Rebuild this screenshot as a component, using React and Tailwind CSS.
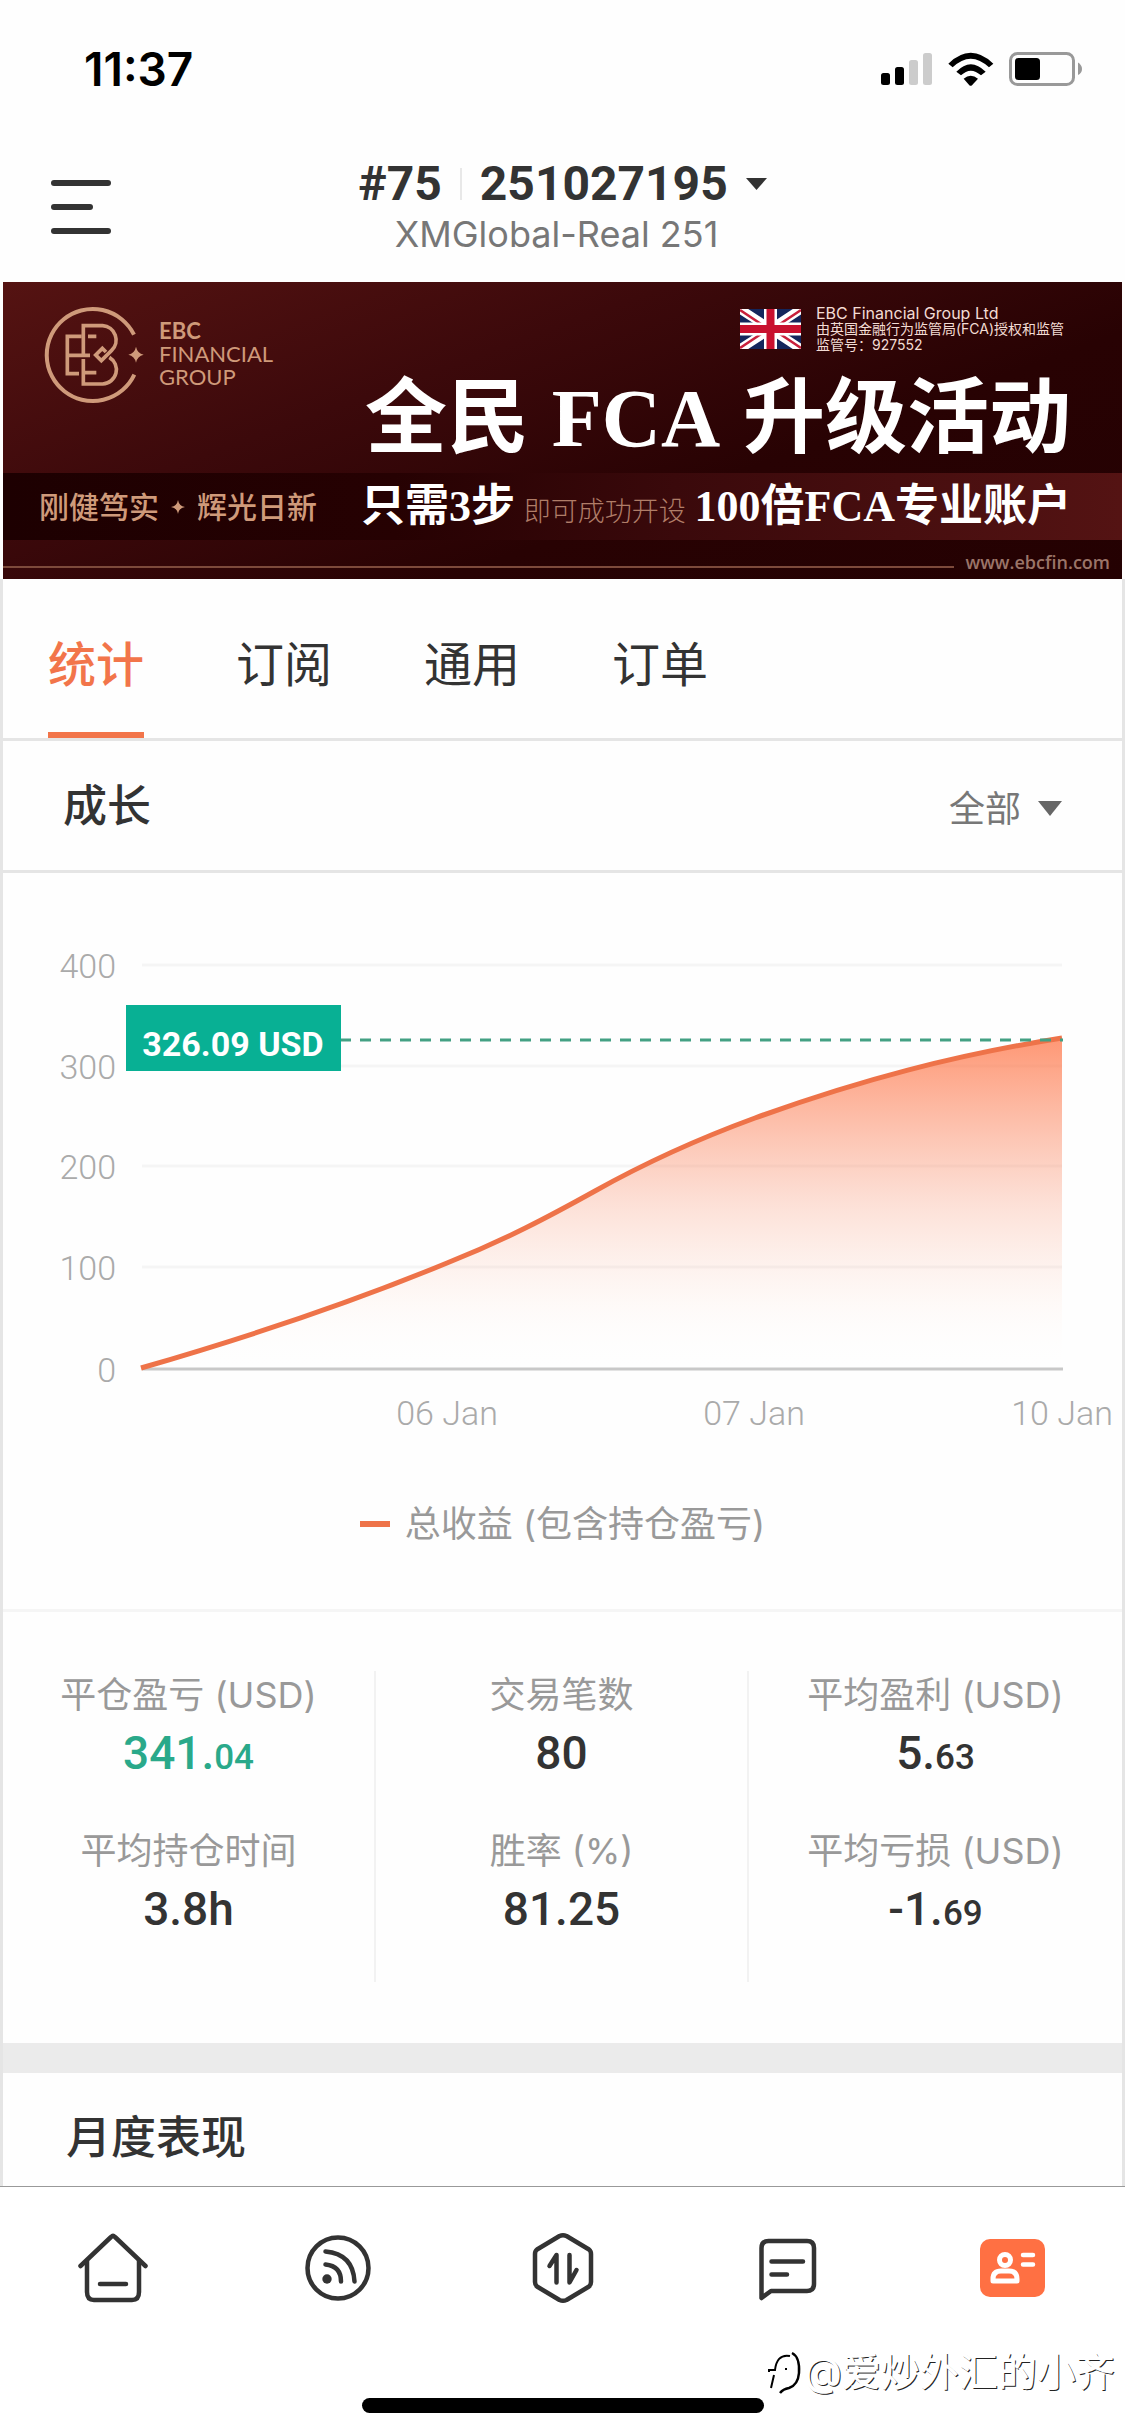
import React from "react";

const CJK = "font-['Inter','Noto_Sans_CJK_SC',sans-serif]";
const DIN = "font-['Roboto','Noto_Sans_CJK_SC',sans-serif]";

function StatusBar() {
  return (
    <div className="flex h-[138px] items-center justify-between pl-[84px] pr-[42px]">
      <span className="text-[46px] font-semibold leading-none text-black">11:37</span>
      <div className="flex items-center gap-[15px]">
        <svg className="h-[33px] w-[52px]" viewBox="0 0 52 33" aria-label="信号">
          <rect x="0" y="20" width="9" height="12" rx="2.5" fill="#000" />
          <rect x="14" y="14" width="9" height="18" rx="2.5" fill="#000" />
          <rect x="28" y="7" width="9" height="25" rx="2.5" fill="#ccc" />
          <rect x="42" y="0" width="9" height="32" rx="2.5" fill="#ccc" />
        </svg>
        <svg className="h-[34px] w-[46px]" viewBox="234 34 138 102" aria-label="Wi-Fi">
          <path d="M235 69 Q302 4 370 69 L357 80 Q302 28 248 80 Z" fill="#000" />
          <path d="M259 93 Q302 48 347 93 L333 104 Q302 76 273 104 Z" fill="#000" />
          <path d="M281 114 Q302 96 324 114 L306 134 Q302 137 298 134 Z" fill="#000" />
        </svg>
        <svg className="h-[34px] w-[74px]" viewBox="0 0 74 34" aria-label="电池">
          <rect x="1.5" y="1.5" width="63" height="31" rx="7" fill="none" stroke="#999" strokeWidth="3" />
          <rect x="6" y="6" width="25" height="22" rx="3.5" fill="#000" />
          <path d="M69 10.500 Q73 13 73 17 Q73 21 69 23 Z" fill="#999" />
        </svg>
      </div>
    </div>
  );
}

function Header() {
  return (
    <header className="grid h-[144px] grid-cols-[1fr_auto_1fr] items-start">
      <button type="button" aria-label="菜单" className="ml-[51px] mt-[42px] flex w-[60px] flex-col gap-[18px]">
        <span className="h-1.5 w-full rounded-full bg-[#333]" />
        <span className="h-1.5 w-[42px] rounded-full bg-[#333]" />
        <span className="h-1.5 w-full rounded-full bg-[#333]" />
      </button>
      <div className="flex flex-col items-center pt-[18px]">
        <button type="button" className={`flex items-center text-[#333] ${DIN}`}>
          <span className="text-[48px] font-bold leading-[56px]">#75</span>
          <span className="mx-[18px] h-8 w-0.5 bg-[#e8e8e8]" />
          <span className="text-[48px] font-bold leading-[56px]">251027195</span>
          <svg className="ml-[18px] h-3 w-[21px]" viewBox="0 0 21 12" aria-hidden="true">
            <path d="M0 0H21L10.500 12Z" fill="#333" />
          </svg>
        </button>
        <p className="pr-3 text-[36px] leading-[44px] text-[#777]">XMGlobal-Real 251</p>
      </div>
    </header>
  );
}

function EbcMark() {
  return (
    <svg className="h-[100px] w-[103px]" viewBox="20 30 309 300" aria-label="EBC">
      <g fill="none" stroke="#cf9a7a">
        <path d="M296 119 A138 138 0 1 0 297 239" strokeWidth="12" />
        <path d="M139 124H96V236H131M96 181H164" strokeWidth="11" />
        <path d="M144 181V92H202A43 43 0 0 1 229 166L198 197L181 180L201 160L212 171" strokeWidth="11" />
        <path d="M144 192V267H202A43 43 0 0 0 222 187" strokeWidth="11" />
        <path d="M158 124H183M144 233H183" strokeWidth="11" />
      </g>
      <path d="M302 155Q306 175 325 179Q306 183 302 203Q298 183 279 179Q298 175 302 155Z" fill="#cf9a7a" />
    </svg>
  );
}

function UnionFlag() {
  return (
    <svg className="h-10 w-[61px]" viewBox="0 0 61 40" aria-label="英国国旗">
      <rect width="61" height="40" fill="#14265c" />
      <path d="M0 0L61 40M61 0L0 40" stroke="#fff" strokeWidth="9" />
      <path d="M0 1L30 21M61 39L31 19M61 1L31 21M0 39L30 19" stroke="#c8203c" strokeWidth="2.500" />
      <path d="M30.500 0V40M0 20H61" stroke="#fff" strokeWidth="13" />
      <path d="M30.500 0V40M0 20H61" stroke="#c8102e" strokeWidth="8" />
    </svg>
  );
}

function Banner() {
  return (
    <section className="mx-[3px] flex flex-col bg-[linear-gradient(160deg,#551312_0%,#3c090b_35%,#280203_65%,#240102_100%)]">
      <div className="flex h-[191px] justify-between pl-[39px] pr-[51px]">
        <div className="flex items-start gap-[14px] pt-[23px]">
          <EbcMark />
          <p className="pt-[14px] font-['Lato',sans-serif] text-[22px] leading-[23px] text-[#cf9a7a]">
            <strong className="block font-bold">EBC</strong>
            <span className="block">FINANCIAL</span>
            <span className="block">GROUP</span>
          </p>
        </div>
        <div className="flex w-[706px] flex-col pt-[23px]">
          <div className="flex items-start gap-[15px] self-end">
            <div className="pt-1">
              <UnionFlag />
            </div>
            <p className="w-[255px] whitespace-nowrap text-[14px] leading-4 text-[#f3dcd4]">
              <span className="block text-[16px]">EBC Financial Group Ltd</span>
              <span className="block">由英国金融行为监管局(FCA)授权和监管</span>
              <span className="block">监管号：927552</span>
            </p>
          </div>
          <h1 className="mt-4 flex justify-between whitespace-nowrap font-['Liberation_Serif','Noto_Sans_CJK_SC',serif] text-[82px] font-bold leading-[100px] text-white">
            <span>全民</span>
            <span>FCA</span>
            <span>升级活动</span>
          </h1>
        </div>
      </div>
      <div className="flex h-[67px] items-center justify-between bg-[linear-gradient(90deg,#1d0001_0%,#260102_35%,#3a090b_60%,#541313_100%)] pl-9 pr-[51px]">
        <p className="flex items-center gap-[12px] text-[30px] font-medium leading-10 text-[#cf9a7a]">
          <span>刚健笃实</span>
          <svg className="h-3.5 w-3.5" viewBox="0 0 14 14" aria-hidden="true">
            <path d="M7 0Q8 6 14 7Q8 8 7 14Q6 8 0 7Q6 6 7 0Z" fill="#cf9a7a" />
          </svg>
          <span>辉光日新</span>
        </p>
        <p className="flex w-[710px] items-baseline justify-between whitespace-nowrap pt-1.5 font-['Liberation_Serif','Noto_Sans_CJK_SC',serif] text-[44px] font-bold leading-[60px] text-white">
          <span>只需3步</span>
          <span className="text-[27px] font-light text-[#b07d68]">即可成功开设</span>
          <span>100倍FCA专业账户</span>
        </p>
      </div>
      <div className="flex h-[39px] items-center gap-3 pr-3">
        <span className="mt-3.5 h-0.5 flex-1 bg-[#7d4a3b]" />
        <a href="#ebcfin" className="pt-1 font-['Open_Sans',sans-serif] text-[18px] font-semibold leading-5 text-[#9b7468]">
          www.ebcfin.com
        </a>
      </div>
    </section>
  );
}

const TABS = ["统计", "订阅", "通用", "订单"];

function Tabs() {
  return (
    <nav className="flex h-[162px] gap-[92px] border-b-3 border-[#e5e5e5] pl-[45px]">
      {TABS.map((t, i) => (
        <button
          key={t}
          type="button"
          className={
            i === 0
              ? "border-b-6 border-[#f2754a] pt-[18px] text-[48px] font-medium text-[#f2754a]"
              : "border-b-6 border-transparent pt-[18px] text-[48px] text-[#333]"
          }
        >
          {t}
        </button>
      ))}
    </nav>
  );
}

const Y_TICKS = [
  { label: "400", y: 92 },
  { label: "300", y: 193 },
  { label: "200", y: 293 },
  { label: "100", y: 394 },
  { label: "0", y: 496 },
];
const X_TICKS = [
  { label: "06 Jan", x: 444 },
  { label: "07 Jan", x: 751 },
  { label: "10 Jan", x: 1059 },
];
const CURVE =
  "M138 495 C242 465 347 430 444 390 C502 367 547 343 592 318 C642 290 692 267 752 245 C857 207 952 182 1059 165";

function GrowthChart() {
  return (
    <svg className="block w-full" viewBox="0 0 1119 566" role="img" aria-label="成长">
      <defs>
        <linearGradient id="area" x1="0" y1="165" x2="0" y2="496" gradientUnits="userSpaceOnUse">
          <stop offset="0" stopColor="#ff6f3f" stopOpacity="0.72" />
          <stop offset="0.5" stopColor="#f98a66" stopOpacity="0.26" />
          <stop offset="0.8" stopColor="#fbb090" stopOpacity="0.06" />
          <stop offset="1" stopColor="#ffffff" stopOpacity="0" />
        </linearGradient>
      </defs>
      {Y_TICKS.slice(0, 4).map((t) => (
        <line key={t.label} x1="139" x2="1059" y1={t.y} y2={t.y} stroke="#f5f5f5" strokeWidth="3" />
      ))}
      <path d={`${CURVE} V496 H138Z`} fill="url(#area)" />
      <line x1="139" x2="1060" y1="496" y2="496" stroke="#c8c8c8" strokeWidth="3" />
      <path d={CURVE} fill="none" stroke="#ee7349" strokeWidth="5" />
      <line x1="337" x2="1060" y1="167" y2="167" stroke="#43a083" strokeWidth="3" strokeDasharray="11 9" />
      <g className={DIN} fontSize="34" fontWeight="300" fill="#aaa">
        {Y_TICKS.map((t) => (
          <text key={t.label} x="113" y={t.y + 13} textAnchor="end">
            {t.label}
          </text>
        ))}
        {X_TICKS.map((t) => (
          <text key={t.label} x={t.x} y="552" textAnchor="middle">
            {t.label}
          </text>
        ))}
      </g>
      <rect x="123" y="132" width="215" height="66" fill="#08b094" />
      <text x="230" y="183" textAnchor="middle" className={DIN} fontSize="34" fontWeight="700" fill="#fff">
        326.09 USD
      </text>
    </svg>
  );
}

const STATS = [
  [
    { label: "平仓盈亏 (USD)", whole: "341.", small: "04", up: true },
    { label: "平均持仓时间", whole: "3.8h" },
  ],
  [
    { label: "交易笔数", whole: "80" },
    { label: "胜率 (%)", whole: "81.25" },
  ],
  [
    { label: "平均盈利 (USD)", whole: "5.", small: "63" },
    { label: "平均亏损 (USD)", whole: "-1.", small: "69" },
  ],
];

function Stats() {
  return (
    <section className="grid grid-cols-3 divide-x-2 divide-[#f2f2f2] border-t-3 border-[#f5f5f5] pb-[61px] pt-[59px]">
      {STATS.map((col, i) => (
        <dl key={i} className="flex h-[311px] flex-col">
          {col.map((s) => (
            <div key={s.label} className="flex h-[156px] flex-col items-center">
              <dt className="whitespace-nowrap text-[36px] leading-[48px] text-[#999]">{s.label}</dt>
              <dd
                className={
                  s.up
                    ? `text-[46px] font-medium leading-[68px] text-[#2aa98a] ${DIN}`
                    : `text-[46px] font-medium leading-[68px] text-[#333] ${DIN}`
                }
              >
                {s.whole}
                {s.small && <span className="text-[35px]">{s.small}</span>}
              </dd>
            </div>
          ))}
        </dl>
      ))}
    </section>
  );
}

function HomeIcon() {
  return (
    <svg className="h-[72px] w-[72px]" viewBox="0 0 72 72" fill="none" stroke="#333" strokeWidth="4.500" strokeLinecap="round" strokeLinejoin="round">
      <path d="M3.500 34L34 5Q36 3 38 5L68.500 34" />
      <path d="M10 29V60Q10 68 17 68H55Q62 68 62 60V29M23 52H49" />
    </svg>
  );
}

function FeedIcon() {
  return (
    <svg className="h-[72px] w-[72px]" viewBox="0 0 72 72" fill="none" stroke="#333" strokeWidth="4.500" strokeLinecap="round">
      <circle cx="36" cy="36" r="30.500" />
      <path d="M23.500 32.500Q39 34 39 49.500M23.500 19.500Q51 22 52.500 49.500" />
      <circle cx="25" cy="47" r="4.700" fill="#333" stroke="none" />
    </svg>
  );
}

function TradeIcon() {
  return (
    <svg className="h-[72px] w-[72px]" viewBox="0 0 72 72" fill="none" stroke="#333" strokeWidth="4.500" strokeLinecap="round" strokeLinejoin="round">
      <path d="M32.500 4Q36 2.500 39.500 4L62 17.500Q64 19 64 22V50Q64 53 62 54.500L39.500 68Q36 69.500 32.500 68L10 54.500Q8 53 8 50V22Q8 19 10 17.500Z" />
      <path d="M22.500 34L29.500 23V50.500M42.500 23V50.500L49.500 38" />
    </svg>
  );
}

function ChatIcon() {
  return (
    <svg className="h-[72px] w-[72px]" viewBox="0 0 72 72" fill="none" stroke="#333" strokeWidth="4.500" strokeLinecap="round" strokeLinejoin="round">
      <path d="M9.500 66V16Q9.500 9 16.500 9H55Q62 9 62 16V52Q62 59 55 59H19Z" />
      <path d="M19.500 29.500H51M19.500 42.500H35" />
    </svg>
  );
}

function AccountIcon() {
  return (
    <svg className="h-[72px] w-[72px]" viewBox="0 0 72 72" fill="none" stroke="#fff" strokeLinecap="round" strokeLinejoin="round">
      <rect x="3" y="7" width="65" height="58" rx="10" fill="#ff7043" stroke="none" />
      <circle cx="28" cy="28" r="5.500" strokeWidth="5" />
      <path d="M16 49V47Q16 39 24 39H32Q40 39 40 47V49Z" strokeWidth="5" />
      <path d="M46 23H56M46 32.500H56" strokeWidth="4.500" />
    </svg>
  );
}

const NAV = [
  ["首页", HomeIcon],
  ["动态", FeedIcon],
  ["交易", TradeIcon],
  ["消息", ChatIcon],
  ["账户", AccountIcon],
];

function BottomNav() {
  return (
    <footer className="relative border-t border-[#999] bg-white">
      <nav className="grid h-[162px] grid-cols-5">
        {NAV.map(([name, Icon]) => (
          <button key={name} type="button" aria-label={name} className="flex items-center justify-center">
            <Icon />
          </button>
        ))}
      </nav>
      <div className="flex h-[88px] items-end justify-center pb-6">
        <span className="h-[15px] w-[402px] rounded-full bg-black" />
      </div>
      <div className="absolute bottom-[42px] right-[10px] flex items-center">
        <svg className="h-[46px] w-[36px]" viewBox="0 0 36 46" fill="none" stroke="#000" aria-hidden="true">
          <path d="M22 7C12 5 8 12 7 21H1V23M6 26L3 39M17 20H19" strokeWidth="2" />
          <path d="M24 4Q32 8 31 24Q30 36 21 39Q15 40 12 44" strokeWidth="2.500" />
        </svg>
        <span className="text-[39px] leading-[46px] text-white [text-shadow:-1px_-1px_0_#fff,1px_1px_0_#222]">
          @爱炒外汇的小齐
        </span>
      </div>
    </footer>
  );
}

export default function App() {
  return (
    <div className={`w-full bg-[#fefefe] ${CJK}`}>
      <StatusBar />
      <Header />
      <Banner />
      <main className="border-x-3 border-[#e5e5e5]">
        <Tabs />
        <section>
          <div className="flex h-[132px] items-center justify-between border-b-3 border-[#e5e5e5] pl-[60px] pr-[60px]">
            <h2 className="text-[44px] font-medium text-[#333]">成长</h2>
            <div className="relative flex items-center pt-1.5">
              <select aria-label="时间范围" className="w-[113px] appearance-none bg-transparent text-[36px] text-[#777]">
                <option>全部</option>
              </select>
              <svg className="pointer-events-none absolute right-0 h-[15px] w-6" viewBox="0 0 24 15" aria-hidden="true">
                <path d="M0 0H24L12 15Z" fill="#666" />
              </svg>
            </div>
          </div>
          <GrowthChart />
          <div className="flex h-[170px] items-center justify-center gap-[15px]">
            <span className="h-1.5 w-[30px] bg-[#ee7349]" />
            <span className="text-[36px] leading-[48px] text-[#999]">总收益 (包含持仓盈亏)</span>
          </div>
        </section>
        <Stats />
        <section className="border-t-[30px] border-[#ebebeb]">
          <h2 className="flex h-[113px] items-center pl-[63px] pt-[16px] text-[45px] font-medium text-[#333]">月度表现</h2>
        </section>
      </main>
      <BottomNav />
    </div>
  );
}
